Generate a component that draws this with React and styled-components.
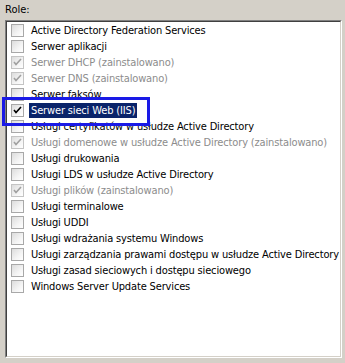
import React from 'react';
import styled, { createGlobalStyle } from 'styled-components';

const GlobalStyle = createGlobalStyle`
    html, body {
        margin: 0;
        padding: 0;
        background: #d4d0c8;
    }
    body {
        font-family: Tahoma, "DejaVu Sans Condensed", "DejaVu Sans", sans-serif;
        font-size: 11px;
    }
`;

const Panel = styled.div`
    width: 345px;
    height: 363px;
    background: #d4d0c8;
    padding: 3px 3px 0 5px;
    box-sizing: border-box;
    position: relative;
    overflow: hidden;
`;

const Caption = styled.div`
    color: #000;
    line-height: 13px;
    margin-bottom: 4px;
`;

const ListBox = styled.div`
    width: 337px;
    height: 338px;
    box-sizing: border-box;
    background: #fff;
    border-style: solid;
    border-width: 1px;
    border-color: #808080 #fff #fff #808080;
`;

const ListInner = styled.div`
    height: 100%;
    box-sizing: border-box;
    border-style: solid;
    border-width: 1px;
    border-color: #404040 #d4d0c8 #d4d0c8 #404040;
    padding: 0 0 0 4px;
    overflow: hidden;
`;

const Row = styled.div`
    display: flex;
    align-items: center;
    height: 16px;
    gap: 5px;
`;

const Box = styled.span`
    width: 11px;
    height: 11px;
    flex: none;
    border: 1px solid ${p => (p.disabled ? '#c4c4c4' : '#a8a8a8')};
    background: linear-gradient(135deg, #dcdcdc 0%, #f4f4f4 60%, #fff 100%);
    display: flex;
    align-items: center;
    justify-content: center;
`;

const Label = styled.span`
    color: ${p => (p.disabled ? '#8c8c8c' : p.selected ? '#fff' : '#000')};
    background: ${p => (p.selected ? '#0a246a' : 'transparent')};
    padding: 1px 2px;
    white-space: nowrap;
    line-height: 13px;
    letter-spacing: -0.15px;
`;

const Highlight = styled.div`
    position: absolute;
    left: 2px;
    top: 97px;
    width: 148px;
    height: 29px;
    box-sizing: border-box;
    border: 3px solid #1a1ae6;
`;

const Check = ({ color }) => (
    <svg width="9" height="9" viewBox="0 0 9 9">
        <path d="M1 4 L3 6.5 L8 1" fill="none" stroke={color} strokeWidth="1.6" />
    </svg>
);

const roles = [
    { text: 'Active Directory Federation Services' },
    { text: 'Serwer aplikacji' },
    { text: 'Serwer DHCP (zainstalowano)', checked: true, disabled: true },
    { text: 'Serwer DNS (zainstalowano)', checked: true, disabled: true },
    { text: 'Serwer faksów' },
    { text: 'Serwer sieci Web (IIS)', checked: true, selected: true },
    { text: 'Usługi certyfikatów w usłudze Active Directory' },
    { text: 'Usługi domenowe w usłudze Active Directory (zainstalowano)', checked: true, disabled: true },
    { text: 'Usługi drukowania' },
    { text: 'Usługi LDS w usłudze Active Directory' },
    { text: 'Usługi plików (zainstalowano)', checked: true, disabled: true },
    { text: 'Usługi terminalowe' },
    { text: 'Usługi UDDI' },
    { text: 'Usługi wdrażania systemu Windows' },
    { text: 'Usługi zarządzania prawami dostępu w usłudze Active Directory' },
    { text: 'Usługi zasad sieciowych i dostępu sieciowego' },
    { text: 'Windows Server Update Services' },
];

const App = () => (
    <Panel>
        <GlobalStyle />
        <Caption>Role:</Caption>
        <ListBox>
            <ListInner>
                {roles.map(r => (
                    <Row key={r.text}>
                        <Box disabled={r.disabled}>
                            {r.checked ? <Check color={r.disabled ? '#a0a0a0' : '#000'} /> : null}
                        </Box>
                        <Label disabled={r.disabled} selected={r.selected}>{r.text}</Label>
                    </Row>
                ))}
            </ListInner>
        </ListBox>
        <Highlight />
    </Panel>
);

export default App;
